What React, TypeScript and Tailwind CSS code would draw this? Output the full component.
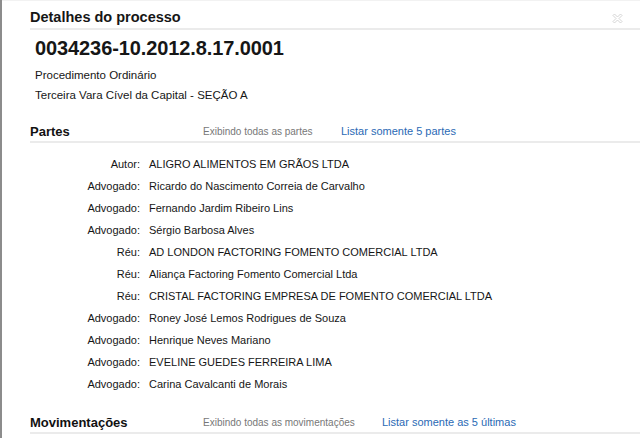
const partes: [string, string][] = [
  ['Autor:', 'ALIGRO ALIMENTOS EM GRÃOS LTDA'],
  ['Advogado:', 'Ricardo do Nascimento Correia de Carvalho'],
  ['Advogado:', 'Fernando Jardim Ribeiro Lins'],
  ['Advogado:', 'Sérgio Barbosa Alves'],
  ['Réu:', 'AD LONDON FACTORING FOMENTO COMERCIAL LTDA'],
  ['Réu:', 'Aliança Factoring Fomento Comercial Ltda'],
  ['Réu:', 'CRISTAL FACTORING EMPRESA DE FOMENTO COMERCIAL LTDA'],
  ['Advogado:', 'Roney José Lemos Rodrigues de Souza'],
  ['Advogado:', 'Henrique Neves Mariano'],
  ['Advogado:', 'EVELINE GUEDES FERREIRA LIMA'],
  ['Advogado:', 'Carina Cavalcanti de Morais'],
];

function SectionHeader({ title, info, link, infoWidth }: { title: string; info: string; link: string; infoWidth: string }) {
  return (
    <div className="flex items-center h-[19px] border-b-2 border-[#ebebeb] box-content">
      <div className="w-[173px] text-[13px] font-bold text-[#111]">{title}</div>
      <div className={`${infoWidth} text-[10px] text-[#777]`}>{info}</div>
      <div className="text-[11px] text-[#2a6ab5]">{link}</div>
    </div>
  );
}

export default function App() {
  return (
    <div className="w-[640px] h-[438px] overflow-hidden bg-white border-l-2 border-[#8c8c8c] font-['Liberation_Sans',Arial,sans-serif] text-[#161616]">
      <div className="border-t border-[#f2f2f2] pl-[28px]">
        <div className="flex items-start justify-between h-[29px] pt-[9px] border-b-2 border-[#ebebeb]">
          <h1 className="text-[14.5px] font-bold leading-none">Detalhes do processo</h1>
          <svg width="11" height="11" viewBox="0 0 11 11" className="mr-[17px] mt-[3px]">
            <path
              d="M1 2.5 L2.5 1 L5.5 4 L8.5 1 L10 2.5 L7 5.5 L10 8.5 L8.5 10 L5.5 7 L2.5 10 L1 8.5 L4 5.5 Z"
              fill="none"
              stroke="#cfcfcf"
              strokeWidth="0.9"
            />
          </svg>
        </div>

        <div className="pl-[5px] mt-[7px]">
          <div className="text-[20px] font-bold leading-[23px] tracking-[-0.1px]">0034236-10.2012.8.17.0001</div>
          <div className="mt-[5px] text-[11.5px] leading-[20px]">Procedimento Ordinário</div>
          <div className="text-[11.5px] leading-[20px]">Terceira Vara Cível da Capital - SEÇÃO A</div>
        </div>

        <div className="mt-[17px]">
          <SectionHeader
            title="Partes"
            info="Exibindo todas as partes"
            link="Listar somente 5 partes"
            infoWidth="w-[138px]"
          />
          <div className="pt-[10px]">
            {partes.map(([label, name], i) => (
              <div key={i} className="flex items-center h-[22px] text-[11px]">
                <div className="w-[110px] text-right">{label}</div>
                <div className="ml-[9px]">{name}</div>
              </div>
            ))}
          </div>
        </div>

        <div className="mt-[18px]">
          <SectionHeader
            title="Movimentações"
            info="Exibindo todas as movimentações"
            link="Listar somente as 5 últimas"
            infoWidth="w-[179px]"
          />
        </div>
      </div>
    </div>
  );
}
